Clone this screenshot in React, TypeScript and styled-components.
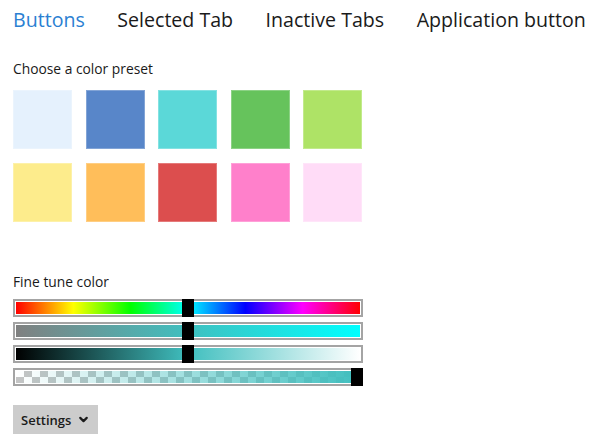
import React from "react";
import styled, { createGlobalStyle } from "styled-components";
import { ChevronDown } from "lucide-react";

const Global = createGlobalStyle`
  html, body { margin: 0; padding: 0; background: #ffffff; }
  body { font-family: "Open Sans", "Noto Sans", "Liberation Sans", sans-serif; color: #1a1a1a; }
`;

const Page = styled.div`
  padding: 0 13px;
  width: 600px;
  box-sizing: border-box;
`;

const TabBar = styled.nav`
  display: flex;
  gap: 32.5px;
  height: 38px;
  align-items: center;
`;

const Tab = styled.div<{ $active?: boolean }>`
  flex: none;
  white-space: nowrap;
  font-size: 19.6px;
  color: ${(p) => (p.$active ? "#2b7fd2" : "#1a1a1a")};
`;

const Label = styled.div<{ $top: number }>`
  font-size: 13.8px;
  margin-top: ${(p) => p.$top}px;
  height: 20px;
  line-height: 20px;
`;

const SwatchGrid = styled.div`
  display: grid;
  grid-template-columns: repeat(5, 59px);
  column-gap: 13.5px;
  row-gap: 14px;
  margin-top: 11px;
`;

const Swatch = styled.div<{ $c: string }>`
  width: 59px;
  height: 59px;
  background: ${(p) => p.$c};
  box-sizing: border-box;
  border: 1px solid rgba(255, 255, 255, 0.25);
`;

const Sliders = styled.div`
  display: flex;
  flex-direction: column;
  gap: 5px;
  margin-top: 7px;
  width: 350px;
`;

const Track = styled.div`
  position: relative;
  height: 18px;
  box-sizing: border-box;
  border: 2px solid #a4a4a4;
  padding: 1px;
  background: #ffffff;
`;

const Fill = styled.div<{ $bg: string }>`
  height: 100%;
  background: ${(p) => p.$bg};
`;

const Thumb = styled.div`
  position: absolute;
  top: -2px;
  width: 12px;
  height: 18px;
  background: #000000;
`;

const SettingsButton = styled.button`
  margin-top: 19px;
  display: flex;
  align-items: center;
  gap: 6px;
  height: 29px;
  padding: 0 8px 0 8px;
  border: none;
  background: #cccccc;
  font-family: "Open Sans", "Noto Sans", sans-serif;
  font-size: 13px;
  font-weight: 600;
  color: #1a1a1a;
`;

const swatches = [
  "#e5f1fd", "#5886c9", "#5bd8d8", "#66c35c", "#aee366",
  "#fdec8c", "#ffbe5a", "#dc4e4e", "#ff80cb", "#ffdcf7",
];

const checker =
  "repeating-conic-gradient(#c4c4c4 0% 25%, #ffffff 0% 50%) 0 0 / 16px 12px";

const sliders: { bg: string; pos: number }[] = [
  {
    bg: "linear-gradient(to right, #ff0000, #ffff00, #00ff00, #00ffff, #0000ff, #ff00ff, #ff0000)",
    pos: 0.5,
  },
  { bg: "linear-gradient(to right, #808080, #00ffff)", pos: 0.5 },
  { bg: "linear-gradient(to right, #000000, #40bfbf, #ffffff)", pos: 0.5 },
  {
    bg: `linear-gradient(to right, rgba(64,191,191,0), rgba(64,191,191,1)), ${checker}`,
    pos: 1,
  },
];

export default function App() {
  return (
    <Page>
      <Global />
      <TabBar>
        <Tab $active>Buttons</Tab>
        <Tab>Selected Tab</Tab>
        <Tab>Inactive Tabs</Tab>
        <Tab>Application button</Tab>
      </TabBar>
      <Label $top={21}>Choose a color preset</Label>
      <SwatchGrid>
        {swatches.map((c) => (
          <Swatch key={c} $c={c} />
        ))}
      </SwatchGrid>
      <Label $top={50}>Fine tune color</Label>
      <Sliders>
        {sliders.map((s, i) => (
          <Track key={i}>
            <Fill $bg={s.bg} />
            <Thumb style={{ left: `${s.pos * (350 - 12) - 2}px` }} />
          </Track>
        ))}
      </Sliders>
      <SettingsButton>
        Settings
        <ChevronDown size={13} strokeWidth={4} />
      </SettingsButton>
    </Page>
  );
}
